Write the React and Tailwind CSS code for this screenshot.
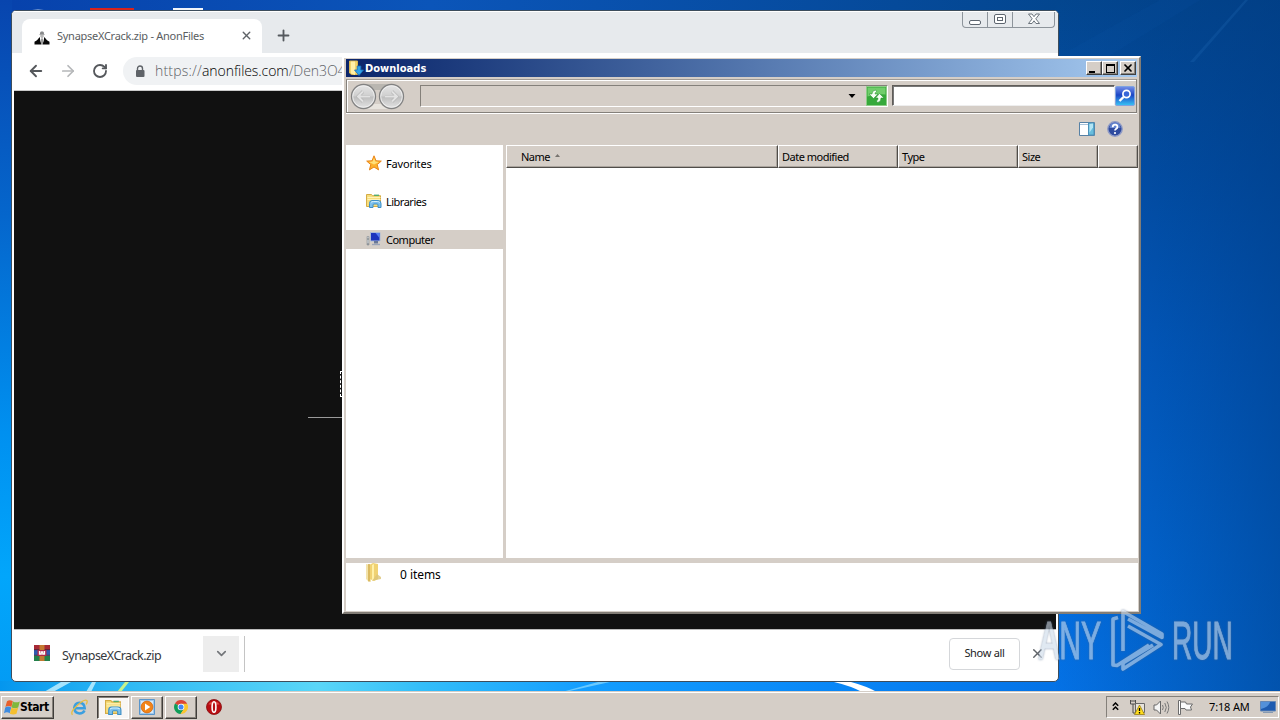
import { ArrowLeft, ArrowRight, RotateCw, Plus, X, ChevronDown } from 'lucide-react';

var COLUMNS = [
  { label: 'Name', width: 'w-[272px] pl-[14px]', sorted: true },
  { label: 'Date modified', width: 'w-[120px] pl-[3px]' },
  { label: 'Type', width: 'w-[120px] pl-[3px]' },
  { label: 'Size', width: 'w-[80px] pl-[3px]' },
  { label: '', width: 'w-[40px]' },
];

var PLACES = [
  { label: 'Favorites', icon: StarIcon },
  { label: 'Libraries', icon: LibraryIcon },
  { label: 'Computer', icon: ComputerIcon, active: true },
];

function StarIcon() {
  return (
    <svg width="16" height="16" viewBox="0 0 16 16">
      <path d="M8 .8l2 5 5.3.3-4.1 3.500 1.400 5.300L8 12l-4.600 2.900 1.400-5.300L.7 6.100 6 5.800z" fill="#fdb22c" stroke="#e9861a" strokeWidth="1" strokeLinejoin="round" />
      <path d="M8 3l1.300 3.600 3.700.3L8 9.500 3 7l3.700-.4z" fill="#ffe07a" />
    </svg>
  );
}

function LibraryIcon({ size = 16 }) {
  return (
    <svg width={size} height={size} viewBox="0 0 16 16">
      <path d="M.5 1.500h5l1 1.200h8v10.800H.5z" fill="#f6dd7c" stroke="#d5ac45" />
      <path d="M1.500 4.500h13M1.500 6.500h13" stroke="#fff3b8" />
      <path d="M8 2.300h5" stroke="#55ad6c" strokeWidth="1.400" />
      <path d="M3.500 14.500V10.500q0-3 2.500-3h6q3 0 3 3v4h-3V12q0-1-1-1h-3q-1 0-1 1v2.500z" fill="#7cc0ec" stroke="#3d8fc7" />
      <path d="M4.800 9.500q1-1 2.500-1h4q1.700 0 2.500 1" fill="none" stroke="#d4f1fd" />
    </svg>
  );
}

function ComputerIcon() {
  return (
    <svg width="16" height="16" viewBox="0 0 16 16">
      <path d="M1 5.500h2V14H1z" fill="#c9cdd2" stroke="#8a9096" strokeWidth=".6" />
      <path d="M1.500 8h1M1.500 13h1" stroke="#3c4349" />
      <path d="M4.500 1.500h9.500v8.500H4.500z" fill="#1a32bd" stroke="#a9b9d7" />
      <path d="M9.500 2h4v5z" fill="#547cf1" />
      <path d="M8 10h4v2.500H8z" fill="#687797" />
      <path d="M6 13.500h8" stroke="#9aa4b8" strokeWidth="1.400" />
    </svg>
  );
}

function DownloadsIcon() {
  return (
    <svg width="16" height="16" viewBox="0 0 16 16">
      <path d="M1.500 1h8v13.500h-6l-2-1.500z" fill="#f0d36c" stroke="#d9b650" />
      <path d="M3 1.500h4V15l-4-1.500z" fill="#fff0a8" />
      <path d="M9.200 6h3.600v4h2.700L11 15.500 6.500 10h2.700z" fill="#30a3e9" stroke="#1a6fb9" strokeWidth=".8" />
    </svg>
  );
}

function FolderIcon() {
  return (
    <svg width="18" height="20" viewBox="0 0 18 20">
      <path d="M1 1l5 1v17l-3-1-2-2z" fill="#f0dc96" opacity=".8" />
      <path d="M5 1.500L8 0l5 1v15l-4 2-4-2z" fill="#f0d272" />
      <path d="M3 1h2v17l-1 1-1-1z" fill="#d0a840" opacity=".7" />
      <path d="M7 2l2-1v15l-2 2z" fill="#fff0a8" />
      <path d="M12 11l4 3v2l-5 1-4 1z" fill="#dcc477" opacity=".8" />
    </svg>
  );
}

function IncognitoMan() {
  return (
    <svg width="16" height="14" viewBox="0 0 16 14">
      <path d="M6 3C6 1 6.500 .5 8 .5s2 .5 2 2.500l1 .8H5z" fill="#88898b" />
      <path d="M6.300 4h3.400v2L8 7.500 6.300 6z" fill="#b9b9b9" />
      <path d="M.5 13.500V10.800L3 9.300 5.700 6l1.600 7.500h1.400L10.300 6 13 9.300l2.500 1.500v2.700z" fill="#080808" />
      <path d="M6 6L7.300 13.500h1.400L10 6 8 8z" fill="#fff" />
      <path d="M8 7.500v6" stroke="#222" strokeWidth=".9" />
    </svg>
  );
}

function RarIcon() {
  return (
    <svg width="16" height="16" viewBox="0 0 16 16">
      <path d="M0 0h16v5H0z" fill="#a72a35" />
      <path d="M0 5h16v5.500H0z" fill="#315bb0" />
      <path d="M0 10.500h16V16H0z" fill="#23814b" />
      <path d="M0 4.700h16M0 10.300h16" stroke="#411f3c" strokeWidth=".8" />
      <path d="M5.500 0h5v16h-5z" fill="#c47931" />
      <path d="M3.500 5h9v6h-9z" fill="#b22849" />
      <path d="M5.500 6v3h1.700V7h1.600v2h1.700V6" fill="none" stroke="#fff" strokeWidth="1.300" />
    </svg>
  );
}

function NavButtons() {
  return (
    <svg width="56" height="28" viewBox="0 0 56 28">
      <defs>
        <linearGradient id="orb" x1="0" y1="0" x2="0" y2="1">
          <stop offset="0" stopColor="#e6e6e6" />
          <stop offset=".48" stopColor="#cfcfcf" />
          <stop offset=".52" stopColor="#bebebe" />
          <stop offset="1" stopColor="#e4e4e4" />
        </linearGradient>
      </defs>
      <path d="M14 2h28q-6 3-6 6H20q0-3-6-6z" fill="#b9b6b0" />
      <path d="M15 27q6-1 9-5h7q3 4 9 5z" fill="#e8e4de" />
      <circle cx="13.500" cy="14.500" r="12" fill="url(#orb)" stroke="#828282" strokeWidth="1.300" />
      <circle cx="13.500" cy="14.500" r="10.800" fill="none" stroke="#f5f5f5" strokeWidth=".8" />
      <circle cx="41.500" cy="14.500" r="12" fill="url(#orb)" stroke="#828282" strokeWidth="1.300" />
      <circle cx="41.500" cy="14.500" r="10.800" fill="none" stroke="#f5f5f5" strokeWidth=".8" />
      <path d="M20 14.500H8m5-5l-5 5 5 5M35 14.500h12m-5-5l5 5-5 5" fill="none" stroke="#b4b4b4" strokeWidth="3.200" />
      <path d="M20 14.500H8m5-5l-5 5 5 5M35 14.500h12m-5-5l5 5-5 5" fill="none" stroke="#e2e2e2" strokeWidth="2" />
    </svg>
  );
}

function CaptionButton({ children }) {
  return (
    <div className="flex h-[14px] w-4 items-center justify-center border border-t-white border-l-white border-r-[#404040] border-b-[#404040] bg-[#d5cec7] shadow-[inset_-1px_-1px_0_#8a857e]">
      {children}
    </div>
  );
}

function Wallpaper() {
  return (
    <svg className="absolute inset-0" width="1280" height="720" viewBox="0 0 1280 720">
      <defs>
        <linearGradient id="leftEdge" x1="0" y1="0" x2="0" y2="1">
          <stop offset="0" stopColor="#0845ae" />
          <stop offset=".3" stopColor="#0566cc" />
          <stop offset=".6" stopColor="#0090f0" />
          <stop offset=".8" stopColor="#02a6fb" />
          <stop offset="1" stopColor="#0398f2" />
        </linearGradient>
        <linearGradient id="floor" gradientUnits="userSpaceOnUse" x1="0" y1="0" x2="1060" y2="0">
          <stop offset="0" stopColor="#0496ee" />
          <stop offset=".12" stopColor="#2fb9f4" />
          <stop offset=".3" stopColor="#5ad6f8" />
          <stop offset=".4" stopColor="#33bdf9" />
          <stop offset=".55" stopColor="#149eff" />
          <stop offset=".8" stopColor="#0885f6" />
          <stop offset="1" stopColor="#0472e6" />
        </linearGradient>
        <linearGradient id="rightSide" gradientUnits="userSpaceOnUse" x1="0" y1="0" x2="0" y2="700">
          <stop offset="0" stopColor="#03468f" />
          <stop offset=".25" stopColor="#0250aa" />
          <stop offset=".5" stopColor="#025dc6" />
          <stop offset=".8" stopColor="#026bdc" />
          <stop offset="1" stopColor="#0472e6" />
        </linearGradient>
        <linearGradient id="shade" x1="0" y1="0" x2="1" y2="0">
          <stop offset="0" stopColor="#003a80" stopOpacity="0" />
          <stop offset="1" stopColor="#003a80" stopOpacity=".55" />
        </linearGradient>
        <linearGradient id="topEdge" x1="0" y1="0" x2="1" y2="0">
          <stop offset="0" stopColor="#0742ac" />
          <stop offset=".4" stopColor="#0b55b9" />
          <stop offset="1" stopColor="#03468f" />
        </linearGradient>
      </defs>
      <path d="M0 0h1000v720H0z" fill="url(#leftEdge)" />
      <path d="M12 0h1048v12H12z" fill="url(#topEdge)" />
      <path d="M0 681h1060v12H0z" fill="url(#floor)" />
      <path d="M1056 0h224v720h-224z" fill="url(#rightSide)" />
      <path d="M1056 0h224v720h-224z" fill="url(#shade)" />
      <path d="M1070 50L1160 0h40l-130 80z" fill="#1d6bbb" opacity=".08" />
      <path d="M1190 62L1245 0h3l-54 62z" fill="#2f7ac4" opacity=".2" />
      <path d="M44 692l17-10h10l-18 10zM86 692l6-10h4l-5 10z" fill="#c9f3ff" opacity=".8" />
      <path d="M117 692l8-10h4l-8 10z" fill="#c8f28c" />
      <path d="M562 692l36-10h12l-45 10z" fill="#8ddcff" opacity=".7" />
      <path d="M834 682h17q15 4 26 10h-15q-11-6-28-10z" fill="#fff" />
      <path d="M26 11q12-3 24 0z" fill="#cbd8e8" />
      <path d="M90 8h44v3H90z" fill="#d8231c" />
      <path d="M173 8h30v3h-30z" fill="#f2f5fa" />
    </svg>
  );
}

function ChromeWindow() {
  return (
    <div className="absolute left-[11px] top-[10px] flex h-[672px] w-[1048px] flex-col overflow-hidden rounded-[5px] border border-[#3d4d5c] bg-white px-[2px] pb-[2px]">
      <div className="-mx-[2px] flex h-[42px] shrink-0 items-start border-t border-white bg-[#e7eaed] pl-[10px]">
        <div className="mt-[7px] flex h-[34px] w-[240px] items-center rounded-t-lg bg-white pl-3">
          <div className="mt-1"><IncognitoMan /></div>
          <span className="ml-[7px] w-[183px] whitespace-nowrap text-[11px] tracking-[-0.27px] text-[#5a5d61]">SynapseXCrack.zip - AnonFiles</span>
          <X size={13} strokeWidth={2.600} className="-mt-px shrink-0 text-[#5f6368]" />
        </div>
        <Plus size={17} strokeWidth={2.600} className="ml-[13px] mt-[15px] text-[#55595e]" />
        <div className="ml-auto mr-[3px] flex h-[16px] rounded-b border border-t-0 border-[#8d949b] text-[#5e6670]">
          <div className="flex w-[25px] justify-center border-r border-[#8d949b] pt-[8px]"><div className="h-[5px] w-3 rounded-[2px] border border-[#5e6670] bg-white" /></div>
          <div className="flex w-[25px] justify-center border-r border-[#8d949b] pt-[2px]">
            <div className="flex h-[10px] w-3 items-center justify-center rounded-[2px] border border-[#5e6670] bg-white"><div className="h-1 w-[6px] border border-[#5e6670]" /></div>
          </div>
          <svg width="41" height="15" viewBox="0 0 41 15">
            <path d="M15.500 2h3.500l2 2.700L23 2h3.500l-3.700 4.800 3.700 4.700H23l-2-2.700-2 2.700h-3.500l3.700-4.700z" fill="#fff" stroke="#5e6670" strokeWidth=".9" />
          </svg>
        </div>
      </div>
      <div className="flex h-[38px] shrink-0 items-center border-b border-[#c9c9c9] bg-white pb-px pl-[13px]">
        <ArrowLeft size={18} strokeWidth={2.500} className="text-[#55585c]" />
        <ArrowRight size={18} strokeWidth={2.300} className="ml-[14px] text-[#b5b7b9]" />
        <RotateCw size={16} strokeWidth={2.800} className="ml-[15px] text-[#55585c]" />
        <div className="ml-[15px] flex h-7 w-[800px] items-center rounded-full bg-[#f0f2f4] pl-3">
          <svg width="10" height="13" viewBox="0 0 10 13">
            <path d="M2.500 6V3.500a2.500 2.500 0 015 0V6" fill="none" stroke="#5f6368" strokeWidth="1.400" />
            <rect x="1" y="5" width="8.500" height="7" rx="1" fill="#5f6368" />
          </svg>
          <span className="-mt-px ml-[10px] whitespace-nowrap font-['Open_Sans'] text-[14px] font-light tracking-[-0.06px] text-[#5d6165]">
            <span className="tracking-[0.2px]">https://</span><span className="text-black">anonfiles.com</span>/Den3O4
          </span>
        </div>
      </div>
      <div className="flex flex-1 flex-col bg-[#111111] pl-[294px] pt-[280px]">
        <div className="ml-8 h-[26px] w-10 border border-dashed border-white" />
        <div className="mt-5 h-px w-[400px] bg-[#9a9a9a]" />
      </div>
      <div className="flex h-[50px] shrink-0 items-center border-t border-[#bcbcbc] bg-white pb-[2px] pl-5">
        <div className="-mt-[2px]"><RarIcon /></div>
        <span className="ml-3 mt-[5px] w-[141px] text-[12.500px] tracking-[-0.55px] text-[#35383c]">SynapseXCrack.zip</span>
        <div className="flex h-9 w-9 items-center justify-center bg-[#ededed]"><ChevronDown size={15} strokeWidth={2.600} className="text-[#73767a]" /></div>
        <div className="ml-[5px] h-9 w-px bg-[#c4c4c4]" />
        <div className="ml-auto flex h-8 w-[71px] items-center justify-center rounded border border-[#d5d7da] text-[11px] tracking-[-0.3px] text-[#222]">Show all</div>
        <X size={15} strokeWidth={2.300} className="ml-[10px] mr-[11px] text-[#5f6368]" />
      </div>
    </div>
  );
}

function ExplorerWindow() {
  return (
    <div className="absolute left-[342px] top-[56px] flex h-[558px] w-[799px] flex-col border-[2px] border-t-white border-l-white border-r-[#827d76] border-b-[#827d76] bg-[#d5cec7] px-[2px] pb-px pt-px text-[11px] text-black">
      <div className="flex h-[18px] shrink-0 items-center bg-linear-to-r from-[#0a246a] to-[#a6caf0] pl-[2px] pr-px">
        <DownloadsIcon />
        <span className="ml-[1px] mt-[2px] flex-1 font-['DejaVu_Sans_Condensed'] text-[11px] font-bold tracking-[0.03px] text-white">Downloads</span>
        <CaptionButton><div className="mr-1 mt-[7px] h-[2px] w-[6px] bg-black" /></CaptionButton>
        <CaptionButton><div className="h-[9px] w-[9px] border border-t-2 border-black" /></CaptionButton>
        <div className="ml-[2px]"><CaptionButton><X size={12} strokeWidth={3.400} className="shrink-0" /></CaptionButton></div>
      </div>
      <div className="mt-[2px] flex h-[34px] shrink-0 items-center border border-[#84807a] border-t-[#a09b95] pl-[3px] shadow-[inset_1px_1px_0_#fff,0_1px_0_#fff]">
        <NavButtons />
        <div className="ml-[14px] flex h-[22px] w-[468px] items-center justify-end border border-t-[#84807a] border-l-[#84807a] border-r-white border-b-white">
          <svg width="8" height="5" viewBox="0 0 8 5"><path d="M.5 0h7L4 4z" fill="#000" /></svg>
          <svg className="ml-[10px]" width="21" height="20" viewBox="0 0 21 20">
            <path d="M.5 .5h20v19H.5z" fill="#36a93b" stroke="#8dcc87" />
            <path d="M1.500 1.500h18v7q-9-1-18 2z" fill="#71cd6c" />
            <path d="M9.500 4Q6 4.500 6 8H3l4.500 4.500L12 8H9q0-1.500 1.500-2.500z" fill="#f5fff4" stroke="#238b2a" strokeWidth=".5" />
            <path d="M11.500 16.500q3.500-.5 3.500-4.500h3L13.500 7.500 9.500 12H12q.2 2-1.500 3z" fill="#f5fff4" stroke="#238b2a" strokeWidth=".5" />
          </svg>
        </div>
        <div className="-mt-px ml-1 h-[21px] w-[223px] border border-t-[#5f5c58] border-l-[#5f5c58] border-r-[#eee] border-b-[#eee] bg-white shadow-[inset_1px_1px_0_#777]" />
        <svg width="20" height="20" viewBox="0 0 20 20">
          <defs>
            <linearGradient id="find" x1="0" y1="0" x2="0" y2="1">
              <stop offset="0" stopColor="#7690e8" />
              <stop offset=".45" stopColor="#1c45c5" />
              <stop offset="1" stopColor="#38c5f5" />
            </linearGradient>
          </defs>
          <rect x=".5" y=".5" width="19" height="19" rx="1.500" fill="url(#find)" stroke="#7fa3e0" />
          <circle cx="11.500" cy="8" r="3.600" fill="#3766d8" stroke="#fff" strokeWidth="1.700" />
          <path d="M8.500 11L4.500 15" stroke="#fff" strokeWidth="2.400" />
        </svg>
      </div>
      <div className="flex h-[32px] shrink-0 items-center justify-end pr-[14px]">
        <svg width="16" height="14" viewBox="0 0 16 14">
          <path d="M.5 .5h15v13H.5z" fill="#fff" stroke="#5781a5" />
          <path d="M1 2.500h9" stroke="#a6c2da" />
          <path d="M9.500 1h5.500v12H9.500z" fill="#67bddd" stroke="#4c91b9" />
          <path d="M10.500 2L14 1.500v4l-3.500 5z" fill="#b3e5f4" />
        </svg>
        <svg className="ml-3" width="16" height="16" viewBox="0 0 16 16">
          <circle cx="8" cy="8" r="7.200" fill="#2e4a9f" stroke="#8f9bc6" strokeWidth="1.400" />
          <path d="M2.500 7a5.500 5.500 0 0111 0z" fill="#6485d0" />
          <path d="M5.700 6.200q0-2.500 2.400-2.500t2.300 2.200q0 1-1.200 1.900T8 9.500" fill="none" stroke="#fff" strokeWidth="1.800" />
          <circle cx="8" cy="12" r="1.100" fill="#fff" />
        </svg>
      </div>
      <div className="flex min-h-0 flex-1">
        <div className="flex w-[157px] shrink-0 flex-col gap-[19px] bg-white pt-[9px]">
          {PLACES.map(function(place) {
            var Icon = place.icon;
            return (
              <div key={place.label} className={'flex h-[19px] items-center pl-5 ' + (place.active ? 'bg-[#d5cec7]' : '')}>
                <div className="-mt-[2px]"><Icon /></div>
                <span className={'ml-1 mt-[2px] ' + (place.label === 'Favorites' ? 'tracking-[-0.15px]' : 'tracking-[-0.5px]')}>{place.label}</span>
              </div>
            );
          })}
        </div>
        <div className="ml-[3px] flex flex-1 flex-col bg-white">
          <div className="flex h-[23px] shrink-0">
            {COLUMNS.map(function(col, index) {
              return (
                <div key={index} className={'flex items-center border border-t-white border-l-white border-r-[#504d49] border-b-[#504d49] bg-[#d5cec7] shadow-[inset_-1px_-1px_0_#aaa49d] ' + col.width}>
                  <span className="mt-[2px] whitespace-nowrap tracking-[-0.5px]">{col.label}</span>
                  {col.sorted && <svg className="-mt-[3px] ml-[5px]" width="5" height="3" viewBox="0 0 5 3"><path d="M0 3l2.500-3L5 3z" fill="#77736e" /></svg>}
                </div>
              );
            })}
          </div>
        </div>
      </div>
      <div className="-mr-px mt-[5px] flex h-[48px] shrink-0 items-start bg-white pl-[19px]">
        <FolderIcon />
        <span className="ml-[17px] mt-[3px] text-[12px] tracking-[-0.05px]">0 items</span>
      </div>
    </div>
  );
}

function Watermark() {
  return (
    <div className="absolute left-[1039px] top-[608px] flex h-[64px] w-[194px] items-center justify-between font-['Liberation_Sans'] text-[53px] leading-none text-[#cddbea] opacity-60 drop-shadow-[0_0_1px_#50688a]">
      <div className="w-[62px]"><div className="origin-left scale-x-[0.570] [-webkit-text-stroke:1px_#cddbea]">ANY</div></div>
      <svg width="56" height="64" viewBox="0 0 56 64" fill="none" stroke="#cddbea" strokeWidth="3.600" strokeLinejoin="round">
        <path d="M9 9.500L4 11v46l4 .5L40 37" />
        <path d="M14 43V3.500L53 26v3.500L19 11" />
        <path d="M19 18l33 18.500L14 61v-6l30-18" />
      </svg>
      <div className="w-[61px]"><div className="origin-left scale-x-[0.530] [-webkit-text-stroke:1px_#cddbea]">RUN</div></div>
    </div>
  );
}

function TaskButton({ active, children }) {
  return (
    <div className={'flex h-[23px] w-8 items-center justify-center border ' + (active
      ? 'border-t-[#403d3a] border-l-[#403d3a] border-r-white border-b-white bg-[#f8f6f4] shadow-[inset_1px_1px_0_#86817a]'
      : 'border-t-white border-l-white border-r-[#403d3a] border-b-[#403d3a] bg-[#d5cec7] shadow-[inset_-1px_-1px_0_#86817a]')}>
      {children}
    </div>
  );
}

function StartFlag() {
  return (
    <svg width="16" height="15" viewBox="0 0 16 15">
      <path d="M3 1.200q2.700-2 5.800 0L7.400 7q-2.700-1.800-6 0z" fill="#e8602c" />
      <path d="M9 1.500q3 1.700 6.800 0L14.200 7.500q-3.200 1.500-6.700 0z" fill="#80b83c" />
      <path d="M1.200 7.400q3-1.900 6 0L5.700 13.200q-2.700-1.800-5.700 0z" fill="#3f8ce0" />
      <path d="M7.400 7.800q3 1.500 6.700 0L12.500 13.800q-3 1.500-6.600 0z" fill="#f5bf2e" />
    </svg>
  );
}

function Taskbar() {
  return (
    <div className="absolute bottom-0 left-0 flex h-[29px] w-full items-center border-t border-[#d5cec7] bg-[#d5cec7] pl-px pt-[2px] shadow-[inset_0_1px_0_#fff]">
      <div className="flex h-[23px] w-[53px] items-center border border-t-white border-l-white border-r-[#403d3a] border-b-[#403d3a] pl-[2px] shadow-[inset_-1px_-1px_0_#86817a]">
        <StartFlag />
        <span className="font-['DejaVu_Sans_Condensed'] text-[12px] font-bold tracking-[-0.4px]">Start</span>
      </div>
      <svg className="ml-[17px]" width="17" height="17" viewBox="0 0 17 17">
        <path d="M13.500 11.500Q12 14.500 8.500 14.500 3.500 14 3.300 9q.5-5 5.200-5.300 5 .2 5.200 5.600H4" fill="none" stroke="#3b9fe0" strokeWidth="2.600" />
        <path d="M1.500 15.800Q-1 13 5.500 7.200 13 0 15.800 1.500q1 1-.6 4" fill="none" stroke="#e8bd3f" strokeWidth="1.300" />
      </svg>
      <div className="ml-[9px] flex gap-[2px]">
        <TaskButton active><LibraryIcon size={17} /></TaskButton>
        <TaskButton>
          <svg width="16" height="16" viewBox="0 0 16 16">
            <path d="M.5 .5h15v15H.5z" fill="#9fc8ec" stroke="#5995cb" />
            <path d="M2 2h12v12H2z" fill="#d6ebfb" />
            <circle cx="8" cy="8" r="5.900" fill="#f28418" stroke="#d5670e" strokeWidth=".8" />
            <path d="M6 4.500L11.300 8 6 11.500z" fill="#fff" />
          </svg>
        </TaskButton>
        <TaskButton>
          <svg width="14" height="14" viewBox="0 0 16 16">
            <path d="M8 8L1.100 4A8 8 0 0115 4.200z" fill="#db4437" />
            <path d="M8 8L1.100 4A8 8 0 007.500 16L11.500 10z" fill="#0f9d58" />
            <path d="M8 4.200h7A8 8 0 017.500 16l4-6z" fill="#fbc52d" />
            <circle cx="8" cy="8" r="3.800" fill="#fff" />
            <circle cx="8" cy="8" r="2.900" fill="#4285f4" />
          </svg>
        </TaskButton>
      </div>
      <svg className="ml-[9px]" width="16" height="16" viewBox="0 0 16 16">
        <circle cx="8" cy="8" r="7.500" fill="#b90d12" stroke="#850b0c" strokeWidth=".8" />
        <path d="M2.500 5.500a6 5 0 0111 0z" fill="#e04a46" />
        <ellipse cx="8" cy="8" rx="1.900" ry="5.300" fill="#b61116" stroke="#fff" strokeWidth="1.600" />
      </svg>
      <div className="ml-auto mr-px flex h-[22px] w-[173px] items-center border border-t-[#84807a] border-l-[#84807a] border-r-white border-b-white pl-[5px]">
        <svg className="-mt-[2px]" width="7" height="9" viewBox="0 0 7 9"><path d="M.8 3.700L3.500 1l2.700 2.700M.8 7.700L3.500 5l2.700 2.700" fill="none" stroke="#000" strokeWidth="1.500" /></svg>
        <svg className="ml-[10px]" width="17" height="16" viewBox="0 0 17 16">
          <path d="M1.500 1v4h5V1M3 1v2M5 1v2M4 5v9h3" fill="none" stroke="#4d4d4d" />
          <path d="M6.500 4.500h9v9h-9z" fill="#e7e3dc" stroke="#686868" />
          <path d="M10.500 6l5 9.500h-10z" fill="#ffdc1c" stroke="#8c7108" strokeWidth=".7" />
          <path d="M10.500 9v3M10.500 13v1.500" stroke="#000" strokeWidth="1.300" />
        </svg>
        <svg className="ml-[7px]" width="17" height="15" viewBox="0 0 17 15">
          <path d="M1 5h2.500L7.500 1v13l-4-4H1z" fill="#f5f5f5" stroke="#676767" />
          <path d="M9.500 5q1.500 2.500 0 5M11.800 3q3 4.500 0 9M14 1.500q3.500 6 0 12" fill="none" stroke="#777" />
        </svg>
        <svg className="ml-[7px]" width="17" height="15" viewBox="0 0 17 15">
          <path d="M1.500 .5h2v14h-2z" fill="#fff" stroke="#6b6b6b" />
          <path d="M3.500 2h5l1 2h6l-2 3 1 3H9L8 8.500H3.500z" fill="#fbfbfb" stroke="#6b6b6b" />
        </svg>
        <span className="ml-[15px] mt-px whitespace-nowrap text-[11px] tracking-[-0.15px]">7:18 AM</span>
        <svg className="ml-[10px] shrink-0" width="16" height="14" viewBox="0 0 16 14">
          <path d="M.5 1.500h15v9.500H.5z" fill="#1e5bb0" stroke="#6587b5" />
          <path d="M1 2h9q-1 5-9 7z" fill="#5390d9" />
          <path d="M3 12.500h10" stroke="#879ab2" />
        </svg>
      </div>
    </div>
  );
}

export default function App() {
  return (
    <div className="relative h-[720px] w-[1280px] overflow-hidden bg-[#0250ab] font-['Noto_Sans',sans-serif]">
      <Wallpaper />
      <ChromeWindow />
      <ExplorerWindow />
      <Watermark />
      <Taskbar />
    </div>
  );
}
